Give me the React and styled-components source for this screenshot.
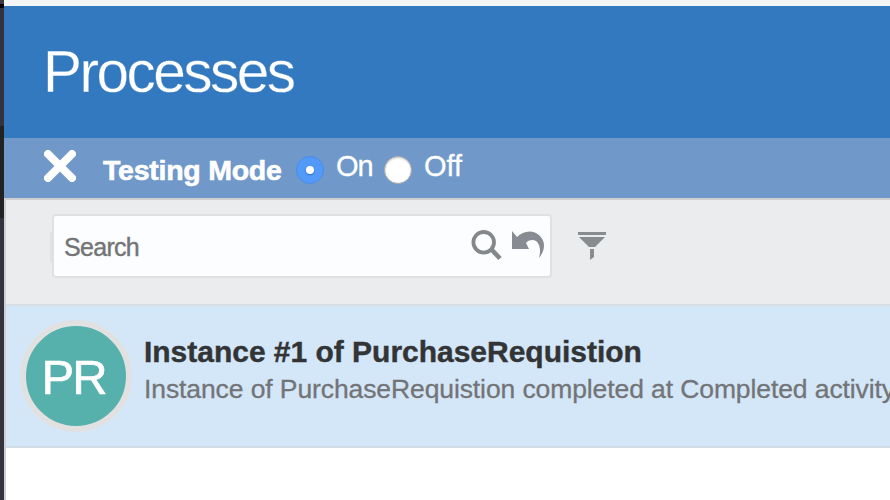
import React from 'react';
import styled, { createGlobalStyle } from 'styled-components';

const GlobalStyle = createGlobalStyle`
  * { box-sizing: border-box; }
  body {
    margin: 0;
    overflow: hidden;
    background: #fff;
    font-family: "Liberation Sans", Arial, sans-serif;
  }
`;

const Page = styled.div`
  display: flex;
  width: 890px;
  height: 500px;
  overflow: hidden;
`;

const Rail = styled.aside`
  flex: 0 0 4px;
  background: linear-gradient(
    #3b3a45 0 4px, #000 4px 8px, #33333e 8px 126px,
    #222 126px 218px, #33323d 218px
  );
`;

const Main = styled.main`
  flex: 1;
  min-width: 0;
  display: flex;
  flex-direction: column;
`;

const TopStrip = styled.div`
  height: 6px;
  background: #f3f5f7;
`;

const Header = styled.header`
  height: 132px;
  padding: 0 0 0 39px;
  display: flex;
  align-items: center;
  background: #3379bf;
`;

const Title = styled.h1`
  margin: 0;
  font-size: 58.5px;
  line-height: 68px;
  font-weight: 400;
  letter-spacing: -2.5px;
  color: #fff;
  -webkit-text-stroke: 0.3px #3379bf;
`;

const TestingBar = styled.div`
  height: 60px;
  padding-left: 40px;
  display: flex;
  align-items: flex-start;
  color: #fff;
  background: #7098c9;
`;

const CloseIcon = styled.svg`
  width: 32px;
  height: 32px;
  margin: 12px 27px 0 0;
  filter: blur(0.6px);
`;

const ModeLabel = styled.strong`
  width: 193px;
  margin-top: 16px;
  font-size: 28.5px;
  line-height: 33px;
  letter-spacing: -0.25px;
  -webkit-text-stroke: 0.6px #fff;
  white-space: nowrap;
`;

const Radio = styled.span`
  width: 28px;
  height: 28px;
  margin-top: 18px;
  display: grid;
  place-items: center;
  border-radius: 50%;
  border: 1px solid ${(p) => (p.$checked ? '#488de9' : '#aaa9a8')};
  background: ${(p) => (p.$checked ? '#5299f8' : '#fff')};
  box-shadow: ${(p) => (p.$checked ? 'none' : 'inset 0 1px 2px #ccc')};

  &::after {
    content: '';
    width: 8px;
    height: 8px;
    border-radius: 50%;
    background: #fff;
    box-shadow: ${(p) => (p.$checked ? '0 1px 2px #2d6fc4' : 'none')};
  }
`;

const OptionLabel = styled.span`
  width: ${(p) => p.$width}px;
  padding-left: 12px;
  margin-top: 12px;
  font-size: 29px;
  line-height: 33px;
  letter-spacing: ${(p) => p.$tracking}px;
  -webkit-text-stroke: 0.3px currentColor;
`;

const Body = styled.section`
  flex: 1;
  border-top: 2px solid #cfcfd1;
  border-left: 2px solid #cfcfd1;
  background: #fff;
`;

const Toolbar = styled.div`
  height: 106px;
  padding: 14px 0 0 44px;
  display: flex;
  align-items: flex-start;
  background: #ebecee;
  border-bottom: 2px solid #d8dfe5;
`;

const SearchEdge = styled.span`
  width: 2px;
  height: 31px;
  margin-top: 18px;
  border-radius: 3px 0 0 3px;
  background: #e0e1e3;
`;

const SearchBox = styled.div`
  width: 500px;
  height: 64px;
  padding: 0 6px 0 10px;
  display: flex;
  align-items: center;
  background: #fcfdff;
  border: 2px solid #e0e1e3;
  border-radius: 4px;
`;

const Placeholder = styled.span`
  flex: 1;
  padding-top: 3px;
  font-size: 25px;
  letter-spacing: -0.7px;
  color: #737475;
  -webkit-text-stroke: 0.4px currentColor;
`;

const SearchIcon = styled.svg`
  width: 32px;
  height: 32px;
  margin-right: 9px;
`;

const UndoIcon = styled.svg`
  width: 32px;
  height: 32px;
`;

const FilterIcon = styled.svg`
  width: 28px;
  height: 28px;
  margin: 18px 0 0 26px;
`;

const InstanceRow = styled.article`
  height: 142px;
  padding: 14px 0 0 14px;
  display: flex;
  align-items: flex-start;
  background: #d4e7f8;
  border-bottom: 2px solid #d3dbe4;
`;

const Avatar = styled.div`
  flex: 0 0 112px;
  height: 112px;
  display: grid;
  place-items: center;
  border: 6px solid #e1e1e2;
  border-radius: 50%;
  background: #56b0ac;
  color: #fff;
  font-size: 49px;
  letter-spacing: -2px;
  padding: 2px 5px 0 0;
  -webkit-text-stroke: 0.6px currentColor;
`;

const InstanceText = styled.div`
  padding: 14px 0 0 12px;
  white-space: nowrap;
`;

const InstanceTitle = styled.h2`
  margin: 0;
  font-size: 30px;
  line-height: 36px;
  letter-spacing: -0.02px;
  color: #333436;
  -webkit-text-stroke: 0.4px currentColor;
`;

const InstanceSummary = styled.p`
  margin: 1px 0 0;
  font-size: 26.5px;
  line-height: 36px;
  letter-spacing: -0.1px;
  color: #737477;
  -webkit-text-stroke: 0.3px currentColor;
`;

export default function App() {
  return (
    <Page>
      <GlobalStyle />
      <Rail />
      <Main>
        <TopStrip />
        <Header><Title>Processes</Title></Header>
        <TestingBar>
          <CloseIcon viewBox="0 0 32 32">
            <path d="M4 4 28 28M28 4 4 28" stroke="#fff" strokeWidth="8" strokeLinecap="round" />
          </CloseIcon>
          <ModeLabel>Testing Mode</ModeLabel>
          <Radio $checked />
          <OptionLabel $width={60} $tracking={-1}>On</OptionLabel>
          <Radio />
          <OptionLabel $width={60} $tracking={-0.1}>Off</OptionLabel>
        </TestingBar>
        <Body>
          <Toolbar>
            <SearchEdge />
            <SearchBox>
              <Placeholder>Search</Placeholder>
              <SearchIcon viewBox="0 0 32 32" fill="none" stroke="#85888b">
                <circle cx="12.7" cy="12.3" r="10.3" strokeWidth="3.8" />
                <path d="m20 19 9 9.5" strokeWidth="4.6" />
              </SearchIcon>
              <UndoIcon viewBox="0 0 32 32" fill="#888b91">
                <defs>
                  <filter id="soften"><feGaussianBlur stdDeviation="0.7" /></filter>
                </defs>
                <path filter="url(#soften)" d="M0 1 5 7C11 1 21-1 28 6c6 6 5 15-1 22 2-7 1-14-3-17-3-2-8-1-10 2l3 6H0Z" />
              </UndoIcon>
            </SearchBox>
            <FilterIcon viewBox="0 0 28 28" fill="#898c8f">
              <path d="M0 0h28v3H0zM1 5h26L17 15h-6zM12 17h4v8l-4 3z" />
            </FilterIcon>
          </Toolbar>
          <InstanceRow>
            <Avatar>PR</Avatar>
            <InstanceText>
              <InstanceTitle>Instance #1 of PurchaseRequistion</InstanceTitle>
              <InstanceSummary>Instance of PurchaseRequistion completed at Completed activity</InstanceSummary>
            </InstanceText>
          </InstanceRow>
        </Body>
      </Main>
    </Page>
  );
}
